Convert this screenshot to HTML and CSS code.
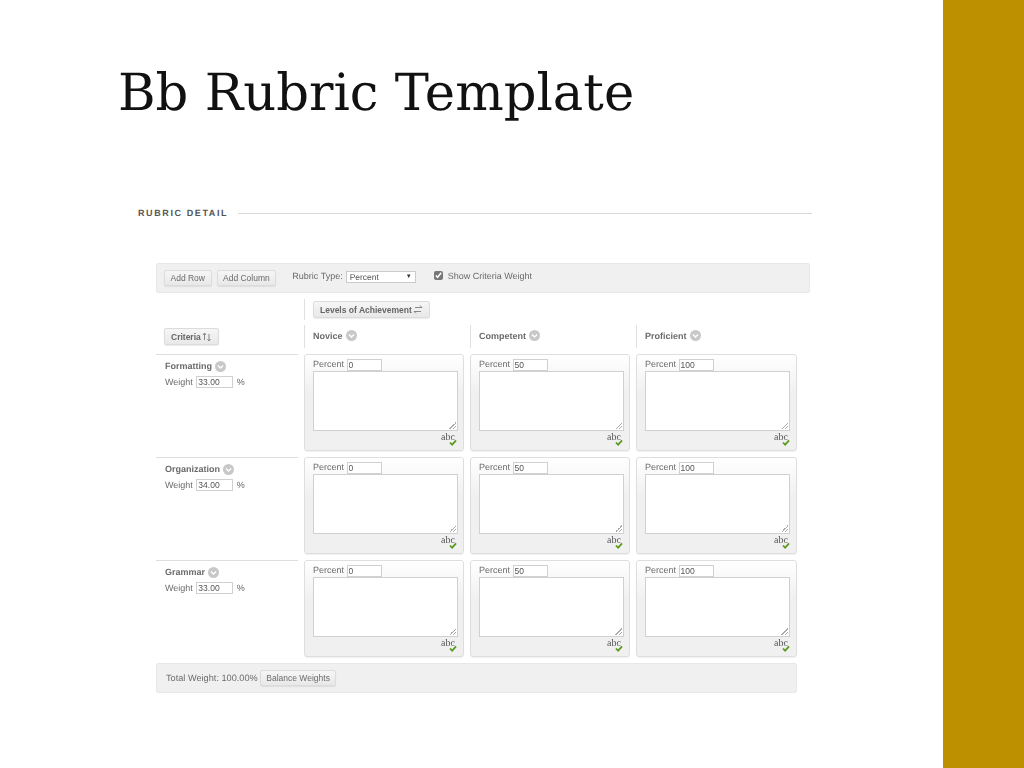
FILE: index.html
```html
<!DOCTYPE html>
<html lang="en">
<head>
  <meta charset="UTF-8">
  <title>Bb Rubric Template</title>
  <link rel="stylesheet" href="styles.css">
</head>
<body>
  <svg class="icon-defs" width="0" height="0">
    <symbol id="chev" viewBox="0 0 12 12">
      <circle cx="6" cy="6" r="6" fill="#c8c8c8"/>
      <path d="M3.2 4.800 6 7.600l2.800-2.800" fill="none" stroke="#fff" stroke-width="1.500"/>
    </symbol>
    <symbol id="check" viewBox="0 0 9 8">
      <path d="M1 4l2.500 2.500L8 1.500" fill="none" stroke="#5c9a1e" stroke-width="2"/>
    </symbol>
  </svg>

  <div class="slide">
    <main class="content">
      <h1 class="slide-title">Bb Rubric Template</h1>

      <div class="section-head">
        <span class="section-name">RUBRIC DETAIL</span>
        <span class="section-line"></span>
      </div>

      <div class="rubric">
        <div class="toolbar">
          <button class="btn" type="button">Add Row</button>
          <button class="btn" type="button">Add Column</button>
          <span class="type-label">Rubric Type:</span>
          <div class="fake-select"><span>Percent</span><span class="select-arrow">▼</span></div>
          <label class="show-weight"><input type="checkbox" checked>Show Criteria Weight</label>
        </div>

        <div class="levels-row">
          <button class="btn btn-strong" type="button">Levels of Achievement
            <svg class="arrows" width="10" height="9" viewBox="0 0 10 9"><path d="M1 6.500h7M1 6.500 3 8.500" fill="none" stroke="#888"/><path d="M2 2.500h7M9 2.500 7 .5" fill="none" stroke="#888"/></svg>
          </button>
        </div>

        <div class="grid">
          <div class="criteria-head">
            <button class="btn btn-strong" type="button">Criteria
              <svg class="arrows" width="10" height="10" viewBox="0 0 10 10"><path d="M2.500 8V1M2.500 1 1 3M2.500 1 4 3" fill="none" stroke="#888"/><path d="M7 2v7M7 9 5.500 7M7 9 8.500 7" fill="none" stroke="#888"/></svg>
            </button>
          </div>
          <div class="level-head">Novice <svg class="chev"><use href="#chev"/></svg></div>
          <div class="level-head">Competent <svg class="chev"><use href="#chev"/></svg></div>
          <div class="level-head">Proficient <svg class="chev"><use href="#chev"/></svg></div>

          <div class="criterion">
            <div class="criterion-name">Formatting <svg class="chev"><use href="#chev"/></svg></div>
            <div class="weight">Weight <input class="num num-weight" value="33.00"> %</div>
          </div>
          <div class="cell">
            <div class="percent">Percent <input class="num" value="0"></div>
            <textarea></textarea>
            <div class="spell"><span>abc</span><svg class="check"><use href="#check"/></svg></div>
          </div>
          <div class="cell">
            <div class="percent">Percent <input class="num" value="50"></div>
            <textarea></textarea>
            <div class="spell"><span>abc</span><svg class="check"><use href="#check"/></svg></div>
          </div>
          <div class="cell">
            <div class="percent">Percent <input class="num" value="100"></div>
            <textarea></textarea>
            <div class="spell"><span>abc</span><svg class="check"><use href="#check"/></svg></div>
          </div>

          <div class="criterion">
            <div class="criterion-name">Organization <svg class="chev"><use href="#chev"/></svg></div>
            <div class="weight">Weight <input class="num num-weight" value="34.00"> %</div>
          </div>
          <div class="cell">
            <div class="percent">Percent <input class="num" value="0"></div>
            <textarea></textarea>
            <div class="spell"><span>abc</span><svg class="check"><use href="#check"/></svg></div>
          </div>
          <div class="cell">
            <div class="percent">Percent <input class="num" value="50"></div>
            <textarea></textarea>
            <div class="spell"><span>abc</span><svg class="check"><use href="#check"/></svg></div>
          </div>
          <div class="cell">
            <div class="percent">Percent <input class="num" value="100"></div>
            <textarea></textarea>
            <div class="spell"><span>abc</span><svg class="check"><use href="#check"/></svg></div>
          </div>

          <div class="criterion">
            <div class="criterion-name">Grammar <svg class="chev"><use href="#chev"/></svg></div>
            <div class="weight">Weight <input class="num num-weight" value="33.00"> %</div>
          </div>
          <div class="cell">
            <div class="percent">Percent <input class="num" value="0"></div>
            <textarea></textarea>
            <div class="spell"><span>abc</span><svg class="check"><use href="#check"/></svg></div>
          </div>
          <div class="cell">
            <div class="percent">Percent <input class="num" value="50"></div>
            <textarea></textarea>
            <div class="spell"><span>abc</span><svg class="check"><use href="#check"/></svg></div>
          </div>
          <div class="cell">
            <div class="percent">Percent <input class="num" value="100"></div>
            <textarea></textarea>
            <div class="spell"><span>abc</span><svg class="check"><use href="#check"/></svg></div>
          </div>
        </div>

        <div class="totals">
          <span class="total-text">Total Weight: 100.00%</span>
          <button class="btn" type="button">Balance Weights</button>
        </div>
      </div>
    </main>
    <aside class="side-band"></aside>
  </div>
</body>
</html>
```

FILE: styles.css
```css
* {
  margin: 0;
  padding: 0;
  box-sizing: border-box;
}

html,
body {
  width: 1024px;
  height: 768px;
  overflow: hidden;
  background: #fff;
}

body {
  font-family: "Liberation Sans", Arial, sans-serif;
  font-size: 9px;
  color: #6b6b6b;
  text-rendering: geometricPrecision;
}

.icon-defs {
  display: block;
  height: 0;
}

.slide {
  display: flex;
  height: 768px;
}

.content {
  flex: 1;
  padding: 57px 0 0 118px;
}

.side-band {
  width: 81px;
  background: #bd9000;
}

.slide-title {
  font-family: "DejaVu Serif", "Liberation Serif", serif;
  font-weight: 400;
  font-size: 51.2px;
  line-height: 72px;
  color: #111;
  white-space: nowrap;
}

.section-head {
  display: flex;
  align-items: center;
  gap: 10px;
  margin: 77px 0 0 20px;
  width: 674px;
  height: 14px;
}

.section-name {
  font-size: 9px;
  font-weight: bold;
  letter-spacing: 1.600px;
  color: #555;
  white-space: nowrap;
}

.section-line {
  flex: 1;
  border-top: 1px solid #d8d8d8;
}

.rubric {
  margin: 43px 0 0 38px;
  width: 654px;
  filter: blur(0.3px);
}

.btn {
  font-family: inherit;
  font-size: 8.500px;
  color: #6b6b6b;
  height: 16px;
  padding: 0 5.500px;
  background: linear-gradient(#f6f6f6, #e8e8e8);
  border: 1px solid #dcdcdc;
  border-radius: 2px;
  box-shadow: 0 1px 1px rgba(0, 0, 0, 0.08);
  white-space: nowrap;
}

.btn-strong {
  font-weight: bold;
  color: #666;
  display: inline-flex;
  align-items: center;
  gap: 1px;
  height: 17px;
  padding: 0 6px;
}

.toolbar {
  display: flex;
  align-items: center;
  height: 30px;
  padding: 0 7px;
  background: #f0f0f0;
  border: 1px solid #e8e8e8;
  border-radius: 2px;
}

.toolbar .btn {
  margin-right: 5px;
}

.type-label {
  margin: -5px 3px 0 11px;
}

.fake-select {
  display: flex;
  justify-content: space-between;
  align-items: center;
  width: 70px;
  height: 12px;
  margin-top: -3px;
  padding: 0 3px;
  font-size: 8.500px;
  color: #555;
  background: #fff;
  border: 1px solid #ccc;
}

.select-arrow {
  font-size: 6px;
  color: #333;
}

.show-weight {
  display: flex;
  align-items: center;
  gap: 5px;
  margin: -5px 0 0 18px;
}

.show-weight input {
  width: 9px;
  height: 9px;
  accent-color: #777;
}

.levels-row {
  display: flex;
  align-items: center;
  width: 290px;
  height: 21px;
  margin: 6px 0 0 148px;
  padding-left: 8px;
  border-left: 1px solid #e0e0e0;
}

.arrows {
  flex: none;
}

.grid {
  display: grid;
  grid-template-columns: 142px 160px 160px 161px;
  grid-template-rows: 23px 97px 97px 97px;
  column-gap: 6px;
  row-gap: 6px;
  margin-top: 5px;
}

.criteria-head {
  padding: 3px 0 0 8px;
}

.level-head {
  display: flex;
  align-items: center;
  gap: 3px;
  padding: 0 0 2px 8px;
  font-weight: bold;
  border-left: 1px solid #e0e0e0;
}

.chev {
  width: 11px;
  height: 11px;
  flex: none;
}

.criterion {
  padding: 5px 0 0 9px;
  border-top: 1px solid #dedede;
}

.criterion-name {
  display: flex;
  align-items: center;
  gap: 3px;
  font-weight: bold;
  line-height: 12px;
}

.weight {
  margin-top: 4px;
  line-height: 12px;
}

.num {
  font-family: inherit;
  font-size: 8.500px;
  color: #555;
  width: 35px;
  height: 12px;
  padding: 0 1px;
  vertical-align: top;
  background: #fff;
  border: 1px solid #d0d0d0;
}

.num-weight {
  width: 37px;
  margin: 0 1px;
}

.cell {
  padding: 4px 5px 0 8px;
  background: linear-gradient(#fff, #f0f0f0 40%);
  border: 1px solid #dedede;
  border-radius: 3px;
  box-shadow: 0 1px 1px rgba(0, 0, 0, 0.06);
}

.percent {
  height: 12px;
  line-height: 10px;
  white-space: nowrap;
}

.cell textarea {
  display: block;
  width: 145px;
  height: 60px;
  resize: none;
  border: 1px solid #d0d0d0;
  background: linear-gradient(135deg, transparent 50%, #aaa 50%, #aaa 60%, transparent 60%, transparent 75%, #aaa 75%, #aaa 85%, transparent 85%) right 1px bottom 1px / 7px 7px no-repeat #fff;
}

.spell {
  position: relative;
  height: 14px;
  margin-top: 1px;
  padding-right: 3px;
  text-align: right;
  font-family: "Liberation Serif", serif;
  font-size: 10px;
  color: #555;
}

.check {
  position: absolute;
  right: 1px;
  top: 7px;
  width: 8px;
  height: 7px;
}

.totals {
  display: flex;
  align-items: center;
  gap: 2px;
  width: 641px;
  height: 30px;
  margin-top: 6px;
  padding-left: 9px;
  background: #f0f0f0;
  border: 1px solid #e8e8e8;
  border-radius: 2px;
}

.total-text {
  font-size: 9.200px;
}
```
